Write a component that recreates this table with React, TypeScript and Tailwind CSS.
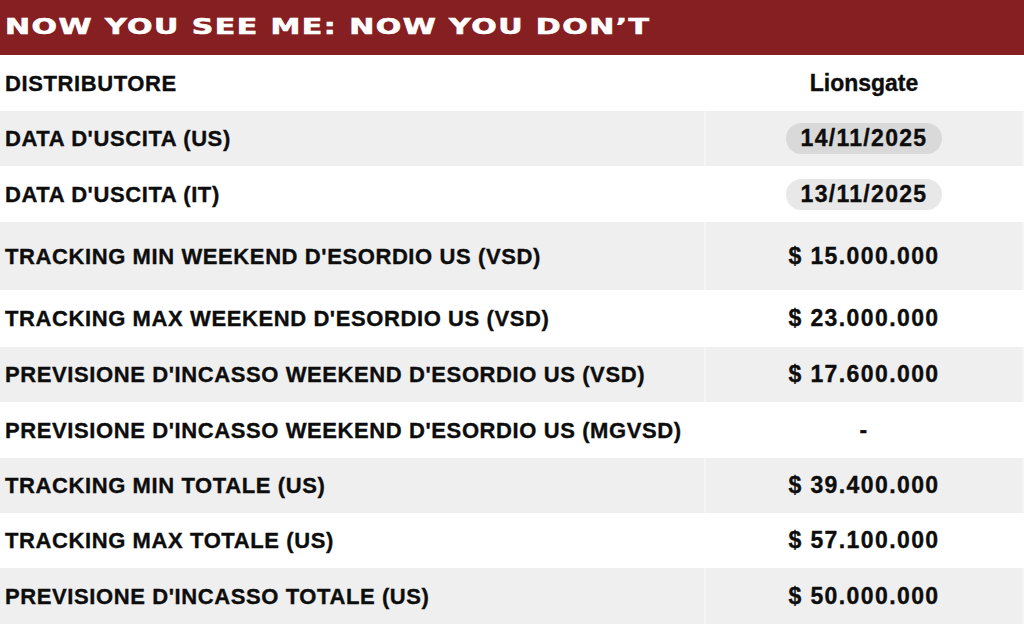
const rows: { label: string; value: string; pill?: boolean; h: string }[] = [
  { label: "DISTRIBUTORE", value: "Lionsgate", h: "h-[56px]" },
  { label: "DATA D'USCITA (US)", value: "14/11/2025", pill: true, h: "h-[55px]" },
  { label: "DATA D'USCITA (IT)", value: "13/11/2025", pill: true, h: "h-[56px]" },
  { label: "TRACKING MIN WEEKEND D'ESORDIO US (VSD)", value: "$ 15.000.000", h: "h-[68px]" },
  { label: "TRACKING MAX WEEKEND D'ESORDIO US (VSD)", value: "$ 23.000.000", h: "h-[57px]" },
  { label: "PREVISIONE D'INCASSO WEEKEND D'ESORDIO US (VSD)", value: "$ 17.600.000", h: "h-[55px]" },
  { label: "PREVISIONE D'INCASSO WEEKEND D'ESORDIO US (MGVSD)", value: "-", h: "h-[56px]" },
  { label: "TRACKING MIN TOTALE (US)", value: "$ 39.400.000", h: "h-[55px]" },
  { label: "TRACKING MAX TOTALE (US)", value: "$ 57.100.000", h: "h-[55px]" },
  { label: "PREVISIONE D'INCASSO TOTALE (US)", value: "$ 50.000.000", h: "h-[56px]" },
]

export default function App() {
  return (
    <div className="w-[1024px] h-[624px] overflow-hidden bg-white font-['Liberation_Sans',Arial,sans-serif] text-[#0d0d0d]">
      <div className="h-[55px] bg-[#861f21] flex items-center pl-[5px] overflow-hidden">
        <h1 className="font-['DejaVu_Sans',sans-serif] font-bold text-[21px] text-white tracking-[1px] origin-left scale-x-[1.43] scale-y-[1.05] whitespace-nowrap [-webkit-text-stroke:0.6px_white]">
          NOW YOU SEE ME: NOW YOU DON’T
        </h1>
      </div>
      {rows.map((r, i) => {
        const gray = i % 2 === 1
        const numeric = r.value !== "Lionsgate"
        return (
          <div key={i} className={`flex ${r.h} ${gray ? "bg-[#efefef]" : "bg-white"}`}>
            <div className={`w-[706px] flex items-center pl-[5px] border-r-2 ${gray ? "border-[#f5f5f5]" : "border-white"}`}>
              <span className="text-[22px] font-bold tracking-[0.6px] whitespace-nowrap [-webkit-text-stroke:0.35px_#0d0d0d]">{r.label}</span>
            </div>
            <div className={`flex-1 flex items-center justify-center border-r-2 ${gray ? "border-[#f5f5f5]" : "border-white"}`}>
              {r.pill ? (
                <span className={`w-[156px] h-[31px] rounded-full flex items-center justify-center text-[23px] font-bold tracking-[1.3px] [-webkit-text-stroke:0.35px_#0d0d0d] ${gray ? "bg-[#d9d9d9]" : "bg-[#e8e8e8]"}`}>
                  {r.value}
                </span>
              ) : (
                <span className={`text-[23px] font-bold [-webkit-text-stroke:0.35px_#0d0d0d] ${numeric ? "tracking-[1.4px]" : ""}`}>{r.value}</span>
              )}
            </div>
          </div>
        )
      })}
    </div>
  )
}
